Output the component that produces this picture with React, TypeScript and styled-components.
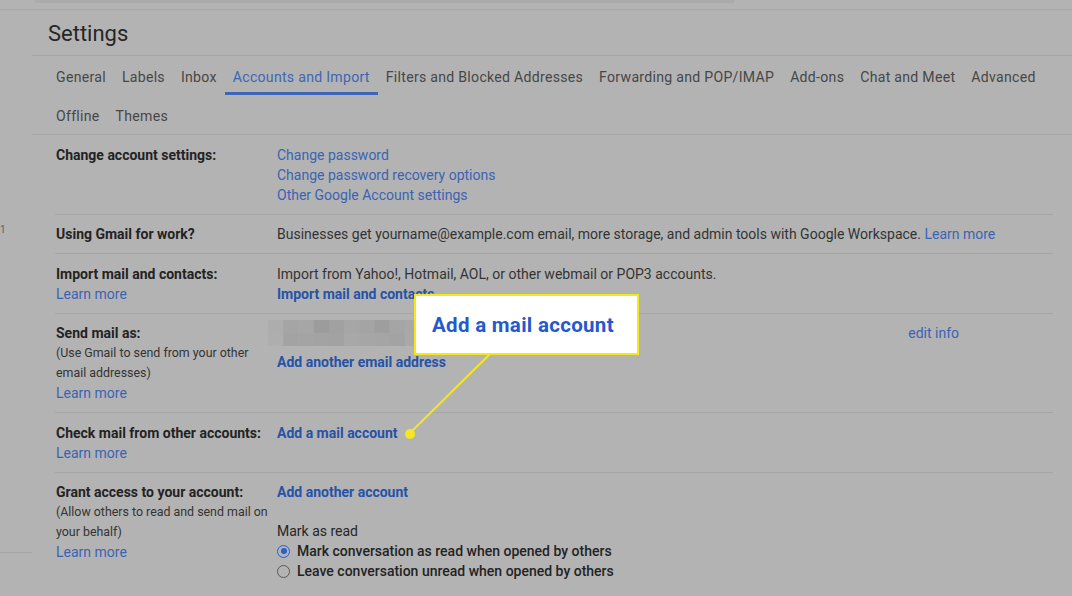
import React from "react";
import styled, { createGlobalStyle } from "styled-components";

const Global = createGlobalStyle`
  html, body { margin: 0; padding: 0; background: #b3b3b3; }
  body { font-family: Roboto, "Liberation Sans", Arial, sans-serif; }
  * { box-sizing: border-box; }
`;

const Root = styled.div`
  position: relative;
  width: 1072px;
  height: 596px;
  overflow: hidden;
  background: #b3b3b3;
  color: #2a2a2a;
`;

const TopBar = styled.div`
  height: 10px;
  border-bottom: 1px solid #a7a7a7;
  padding-left: 35px;
`;

const SearchEdge = styled.div`
  width: 700px;
  height: 3px;
  background: #ababab;
  border-radius: 0 0 6px 6px;
`;

const Body = styled.div`
  display: flex;
`;

const Sidebar = styled.div`
  width: 32px;
  flex: none;
  display: flex;
  flex-direction: column;
`;

const SideCount = styled.span`
  margin-top: 213px;
  font-size: 10px;
  line-height: 14px;
  color: #5e5e5e;
`;

const SideRule = styled.div`
  margin-top: 315px;
  height: 1px;
  background: #a6a6a6;
`;

const Main = styled.div`
  flex: 1;
  min-width: 0;
`;

const TitleBar = styled.div`
  height: 46px;
  padding: 11px 0 0 16px;
  border-bottom: 1px solid #a6a6a6;
`;

const Title = styled.h1`
  margin: 0;
  font-size: 22px;
  line-height: 26px;
  font-weight: 400;
  color: #262626;
`;

const Tabs = styled.nav`
  padding-left: 16px;
  border-bottom: 1px solid #a6a6a6;
`;

const TabRow = styled.div`
  display: flex;
  height: 39px;
`;

const Tab = styled.a<{ $active?: boolean }>`
  display: flex;
  align-items: center;
  padding: 5px 8px 0;
  font-size: 14.1px;
  letter-spacing: 0.28px;
  color: ${(p) => (p.$active ? "#3e66b6" : "#474747")};
  border-bottom: 3px solid ${(p) => (p.$active ? "#3e66b6" : "transparent")};
  white-space: nowrap;
`;

const Sections = styled.div`
  padding-left: 23px;
  width: 1021px;
`;

const Row = styled.div<{ $last?: boolean }>`
  display: grid;
  grid-template-columns: 221px 1fr;
  padding: 9.5px 0 9px 1px;
  border-bottom: ${(p) => (p.$last ? "none" : "1px solid #a6a6a6")};
  font-size: 14px;
  line-height: 20px;
`;

const LabelCol = styled.div`
  display: flex;
  flex-direction: column;
`;

const Label = styled.span`
  font-weight: 700;
  color: #232323;
`;

const Note = styled.span`
  font-size: 12.4px;
  color: #333;
`;

const Link = styled.a<{ $bold?: boolean }>`
  color: ${(p) => (p.$bold ? "#2652a8" : "#3b63b3")};
  font-weight: ${(p) => (p.$bold ? 700 : 400)};
  text-decoration: none;
`;

const ContentCol = styled.div`
  display: flex;
  flex-direction: column;
  align-items: flex-start;
  color: #333;
`;

const Text = styled.span`
  color: #333;
`;

const EmailLine = styled.div`
  display: flex;
  align-items: center;
  justify-content: space-between;
  width: calc(100% + 9px);
  height: 26px;
  margin: -3px 0 6px -9px;
  padding-right: 94px;
`;

const SubHead = styled.span`
  margin-top: 19px;
  color: #262626;
`;

const RadioRow = styled.label`
  display: flex;
  align-items: center;
  gap: 7px;
  font-weight: 500;
  color: #232323;
`;

const Radio = styled.span<{ $checked?: boolean }>`
  width: 13px;
  height: 13px;
  border-radius: 50%;
  border: 1.5px solid ${(p) => (p.$checked ? "#2c5fc8" : "#5a5a5a")};
  display: flex;
  align-items: center;
  justify-content: center;
  &::after {
    content: "";
    width: 6px;
    height: 6px;
    border-radius: 50%;
    background: ${(p) => (p.$checked ? "#2c5fc8" : "transparent")};
  }
`;

const Callout = styled.div`
  position: absolute;
  left: 414px;
  top: 294px;
  width: 225px;
  height: 61px;
  background: #ffffff;
  border: 2.5px solid #f6e71c;
  display: flex;
  align-items: center;
  padding-left: 16px;
  font-size: 20.5px;
  font-weight: 700;
  color: #2458cf;
  letter-spacing: 0.3px;
`;

const Connector = styled.svg`
  position: absolute;
  left: 0;
  top: 0;
  pointer-events: none;
`;

const mosaic: string[][] = [
  ["#adadad", "#a5a5a5", "#a6a6a6", "#9c9c9c", "#a1a1a1", "#a6a6a6", "#a4a4a4", "#9e9e9e", "#a5a5a5", "#a8a8a8"],
  ["#aeaeae", "#a3a3a3", "#a4a4a4", "#a3a3a3", "#a2a2a2", "#a8a8a8", "#a6a6a6", "#a5a5a5", "#a3a3a3", "#a9a9a9"],
];

const Mosaic = () => (
  <svg width="152" height="26" viewBox="0 0 152 26">
    {mosaic.map((row, r) =>
      row.map((c, i) => <rect key={`${r}-${i}`} x={i * 15.2} y={r * 13} width="15.4" height="13" fill={c} />)
    )}
  </svg>
);

export default function App() {
  return (
    <Root>
      <Global />
      <TopBar>
        <SearchEdge />
      </TopBar>
      <Body>
        <Sidebar>
          <SideCount>1</SideCount>
          <SideRule />
        </Sidebar>
        <Main>
          <TitleBar>
            <Title>Settings</Title>
          </TitleBar>
          <Tabs>
            <TabRow>
              <Tab>General</Tab>
              <Tab>Labels</Tab>
              <Tab>Inbox</Tab>
              <Tab $active>Accounts and Import</Tab>
              <Tab>Filters and Blocked Addresses</Tab>
              <Tab>Forwarding and POP/IMAP</Tab>
              <Tab>Add-ons</Tab>
              <Tab>Chat and Meet</Tab>
              <Tab>Advanced</Tab>
            </TabRow>
            <TabRow>
              <Tab>Offline</Tab>
              <Tab>Themes</Tab>
            </TabRow>
          </Tabs>
          <Sections>
            <Row>
              <LabelCol>
                <Label>Change account settings:</Label>
              </LabelCol>
              <ContentCol>
                <Link>Change password</Link>
                <Link>Change password recovery options</Link>
                <Link>Other Google Account settings</Link>
              </ContentCol>
            </Row>
            <Row>
              <LabelCol>
                <Label>Using Gmail for work?</Label>
              </LabelCol>
              <ContentCol>
                <Text>
                  Businesses get yourname@example.com email, more storage, and admin tools with Google Workspace.{" "}
                  <Link>Learn more</Link>
                </Text>
              </ContentCol>
            </Row>
            <Row>
              <LabelCol>
                <Label>Import mail and contacts:</Label>
                <Link>Learn more</Link>
              </LabelCol>
              <ContentCol>
                <Text>Import from Yahoo!, Hotmail, AOL, or other webmail or POP3 accounts.</Text>
                <Link $bold>Import mail and contacts</Link>
              </ContentCol>
            </Row>
            <Row>
              <LabelCol>
                <Label>Send mail as:</Label>
                <Note>(Use Gmail to send from your other</Note>
                <Note>email addresses)</Note>
                <Link>Learn more</Link>
              </LabelCol>
              <ContentCol>
                <EmailLine>
                  <Mosaic />
                  <Link>edit info</Link>
                </EmailLine>
                <Link $bold>Add another email address</Link>
              </ContentCol>
            </Row>
            <Row>
              <LabelCol>
                <Label>Check mail from other accounts:</Label>
                <Link>Learn more</Link>
              </LabelCol>
              <ContentCol>
                <Link $bold>Add a mail account</Link>
              </ContentCol>
            </Row>
            <Row $last>
              <LabelCol>
                <Label>Grant access to your account:</Label>
                <Note>(Allow others to read and send mail on</Note>
                <Note>your behalf)</Note>
                <Link>Learn more</Link>
              </LabelCol>
              <ContentCol>
                <Link $bold>Add another account</Link>
                <SubHead>Mark as read</SubHead>
                <RadioRow>
                  <Radio $checked />
                  Mark conversation as read when opened by others
                </RadioRow>
                <RadioRow>
                  <Radio />
                  Leave conversation unread when opened by others
                </RadioRow>
              </ContentCol>
            </Row>
          </Sections>
        </Main>
      </Body>
      <Connector width="1072" height="596">
        <line x1="490" y1="354" x2="410" y2="433" stroke="#f6e71c" strokeWidth="2" />
        <circle cx="410" cy="434" r="5" fill="#f6e71c" />
      </Connector>
      <Callout>Add a mail account</Callout>
    </Root>
  );
}
